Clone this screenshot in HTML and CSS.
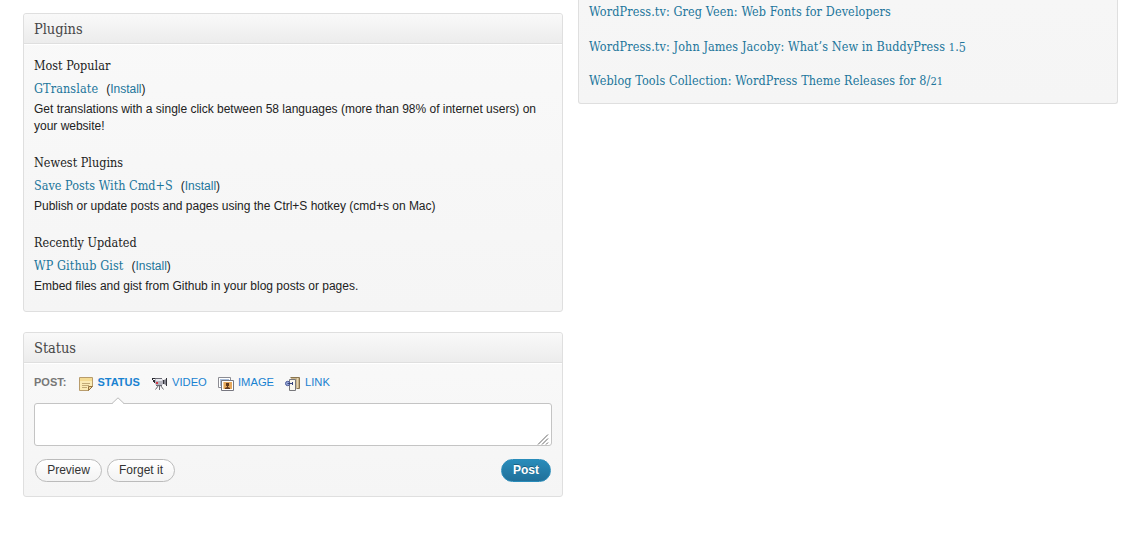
FILE: index.html
```html
<!DOCTYPE html>
<html lang="en">
<head>
<meta charset="utf-8">
<title>Dashboard</title>
<link rel="stylesheet" href="styles.css">
</head>
<body>
<main class="dashboard">
  <div class="column">
    <section class="panel plugins">
      <h3 class="panel-title">Plugins</h3>
      <div class="panel-body">
        <article class="plugin">
          <h4 class="label">Most Popular</h4>
          <div class="plugin-head"><a class="name" href="#">GTranslate</a><span class="install">(<a href="#">Install</a>)</span></div>
          <p class="desc">Get translations with a single click between 58 languages (more than 98% of internet users) on<br>your website!</p>
        </article>
        <article class="plugin">
          <h4 class="label">Newest Plugins</h4>
          <div class="plugin-head"><a class="name tight" href="#">Save Posts With Cmd+S</a><span class="install">(<a href="#">Install</a>)</span></div>
          <p class="desc">Publish or update posts and pages using the Ctrl+S hotkey (cmd+s on Mac)</p>
        </article>
        <article class="plugin">
          <h4 class="label">Recently Updated</h4>
          <div class="plugin-head"><a class="name" href="#">WP Github Gist</a><span class="install">(<a href="#">Install</a>)</span></div>
          <p class="desc">Embed files and gist from Github in your blog posts or pages.</p>
        </article>
      </div>
    </section>
    <section class="panel status">
      <h3 class="panel-title">Status</h3>
      <div class="status-body">
        <nav class="tabs">
          <span class="tabs-label">POST:</span>
          <a class="tab active" href="#">
            <svg width="15" height="15" viewBox="0 0 15 15"><path d="M.5.5h13v9l-4 4H.5z" fill="#fbebb5" stroke="#b89c6c"/><path d="M1 1h12v3H1z" fill="#f4db93"/><path d="M3 6.5h8M3 8.5h7M3 10.5h5" stroke="#c2aa76" fill="none"/><path d="M9.5 13.5v-4h4z" fill="#f0d595" stroke="#94733f"/></svg>
            STATUS</a>
          <a class="tab video" href="#">
            <svg width="16" height="15" viewBox="0 0 16 15"><path d="M7 9h1v4H7z" fill="#66666e"/><path d="M6.5 8.5l-3 4M8.5 8.5l3 4" stroke="#66666e" fill="none"/><path d="M3 2h7l1 1v4l-1 1H4L3 7z" fill="#b4b4be"/><path d="M4 2h6v2H4z" fill="#e9e9ef"/><path d="M4 8h6v1H4zM3 1h7v1H3z" fill="#6b6b74"/><path d="M0 1h3v1H0zM0 2h1v1H0zM1 3h2v3H2V5H1z" fill="#2b2b33"/><path d="M4 5h2v2H4z" fill="#cf3a48"/><path d="M11 3h1v4h-1zM14 1h1v8h-1z" fill="#33333b"/><path d="M12 3l2-1v6l-2-1z" fill="#85858f"/></svg>
            VIDEO</a>
          <a class="tab image" href="#">
            <svg width="16" height="15" viewBox="0 0 16 15"><path d="M.5.5h12v10H.5z" fill="#fff" stroke="#8c8c93"/><path d="M2 2h9v7H2z" fill="#a9bdda"/><path d="M3.5 3.5h12v10h-12z" fill="#fff" stroke="#777780"/><path d="M5 5h9v7H5z" fill="#e5a75c"/><path d="M8 6h3v3h-1v1l2 1v1H7v-1l2-1V9H8z" fill="#60391d"/><path d="M5 5h1v7H5z" fill="#f3d09a"/></svg>
            IMAGE</a>
          <a class="tab link" href="#">
            <svg width="16" height="15" viewBox="0 0 16 15"><path d="M5.5.5h9v11h-3" fill="#c9b48a" stroke="#8a7550"/><path d="M4.5 2.5h6v11h-6z" fill="#f9f7ee" stroke="#77777b"/><path d="M12.5 1v10" stroke="#e5d5b1"/><circle cx="2.7" cy="6.5" r="2.2" fill="#98a9d8" stroke="#4b5998"/><path d="M2.5 6.5H7M7.5 5v3" stroke="#35437c" fill="none"/></svg>
            LINK</a>
        </nav>
        <div class="editor">
          <svg class="pointer" width="14" height="7" viewBox="0 0 14 7"><path d="M1 7L7 1l6 6z" fill="#fff"/><path d="M1 6.5l6-5.7 6 5.7" fill="none" stroke="#bbb"/></svg>
          <svg class="grip" width="12" height="12" viewBox="0 0 12 12"><path d="M1 11.5L11 1.5M5 11.5l6-6M9 11.5l2-2" stroke="#666" fill="none"/></svg>
        </div>
        <div class="actions">
          <button class="button preview">Preview</button>
          <button class="button forget">Forget it</button>
          <button class="button primary">Post</button>
        </div>
      </div>
    </section>
  </div>
  <div class="column">
    <section class="panel news">
      <a class="news-link" href="#">WordPress.tv: Greg Veen: Web Fonts for Developers</a>
      <a class="news-link" href="#">WordPress.tv: John James Jacoby: What’s New in BuddyPress <span class="short">1</span>.<span class="low">5</span></a>
      <a class="news-link" href="#">Weblog Tools Collection: WordPress Theme Releases for 8/<span class="short">21</span></a>
    </section>
  </div>
</main>
</body>
</html>
```

FILE: styles.css
```css
* { box-sizing: border-box; }
body {
  margin: 0;
  background: #fff;
  color: #222;
  font: 12px/17px "Liberation Sans", Arial, sans-serif;
  overflow: hidden;
}
a { color: #21759b; text-decoration: none; }
h3, h4, p { margin: 0; font-weight: normal; }
svg { display: block; flex: none; }

.dashboard { display: flex; gap: 15px; padding-left: 23px; align-items: flex-start; }
.column { width: 540px; flex: none; }
.column:first-child { padding-top: 13px; }
.panel {
  border: 1px solid #dfdfdf;
  border-radius: 3px;
  background: linear-gradient(#f9f9f9, #f5f5f5);
}
.plugins { height: 299px; margin-bottom: 20px; }
.status { height: 165px; }
.panel-title {
  height: 30px;
  padding-left: 10px;
  border-bottom: 1px solid #dfdfdf;
  box-shadow: 0 1px 0 #fff;
  background: linear-gradient(#f9f9f9, #ececec);
  border-radius: 3px 3px 0 0;
  color: #464646;
  font: 14.5px/30px "DejaVu Serif Condensed", "DejaVu Serif", serif;
  font-stretch: condensed;
  letter-spacing: -0.05px;
}
.panel-body { padding: 12px 10px 0; }
.plugin { margin-bottom: 18px; }
.label, .name, .news-link {
  font-family: "DejaVu Serif Condensed", "DejaVu Serif", serif;
  font-stretch: condensed;
  font-size: 12.5px;
  letter-spacing: 0.11px;
  white-space: nowrap;
}
.label { line-height: 20px; letter-spacing: 0.02px; }
.tight { letter-spacing: 0.02px; }
.plugin-head { display: flex; gap: 8px; line-height: 24px; height: 25px; padding-top: 1px; }
.desc { white-space: nowrap; letter-spacing: -0.01px; }

.status-body { padding: 9px 10px 0; }
.tabs { display: flex; align-items: center; height: 20px; }
.tabs-label { width: 45px; color: #777; font-size: 11px; font-weight: bold; }
.tab { display: flex; align-items: center; gap: 4px; color: #1982d1; font-size: 11.2px; white-space: nowrap; }
.tab svg { position: relative; top: 2.5px; }
.active { width: 73px; gap: 3.5px; font-size: 11px; font-weight: bold; }
.video { width: 66px; }
.image { width: 67px; }
.editor {
  position: relative;
  height: 43px;
  margin-top: 11px;
  border: 1px solid #c4c4c4;
  border-radius: 3px;
  background: #fff;
}
.pointer { position: absolute; left: 76px; top: -7px; }
.grip { position: absolute; right: 2px; bottom: 0; }
.actions { display: flex; gap: 5px; padding: 13px 1px 0; }
.button {
  height: 23px;
  padding: 0 0 1px;
  border: 1px solid #bbb;
  border-radius: 12px;
  background: linear-gradient(#fff, #f3f3f3);
  color: #333;
  font: 12px/20px "Liberation Sans", Arial, sans-serif;
}
.preview { width: 67px; }
.forget { width: 68px; }
.button:not(.primary) { line-height: 19px; }
.primary {
  width: 50px;
  margin-left: auto;
  border-color: #298cba;
  background: linear-gradient(#298cba, #21709a);
  color: #fff;
  font-weight: bold;
  line-height: 19px;
  text-shadow: 0 -1px 0 rgba(0, 0, 0, .3);
}

.news {
  height: 104px;
  display: flex;
  flex-direction: column;
  align-items: flex-start;
  gap: 14.5px;
  padding: 2px 10px 0;
  border-top: 0;
  border-radius: 0 0 3px 3px;
  background: linear-gradient(#f6f6f6, #f5f5f5);
}
.news-link { line-height: 20px; }
.short { font-size: 11px; line-height: 1; }
.low { display: inline-block; line-height: 1; transform: translateY(1px); }
```
